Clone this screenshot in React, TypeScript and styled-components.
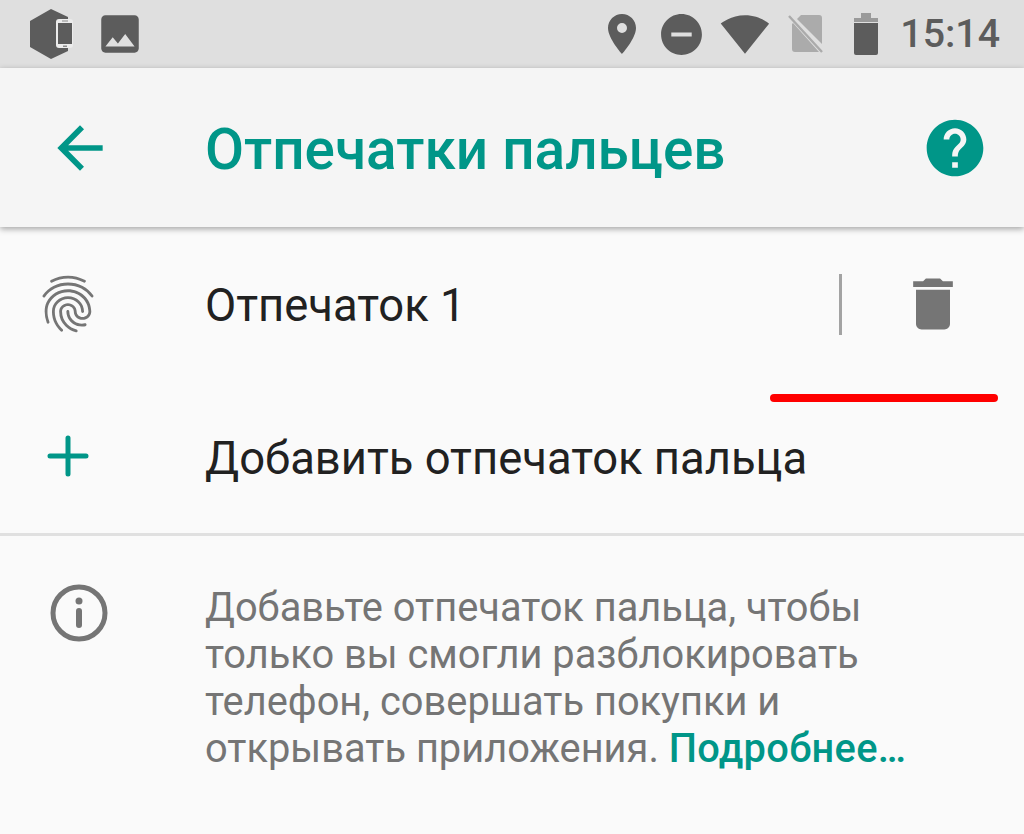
import * as React from 'react';
import styled, { createGlobalStyle } from 'styled-components';
import {
    MdArrowBack,
    MdDelete,
    MdDoNotDisturbOn,
    MdFingerprint,
    MdHelp,
    MdImage,
    MdPlace,
    MdSignalWifi4Bar,
} from 'react-icons/md';

const GlobalStyle = createGlobalStyle`
    html, body {
        margin: 0;
        padding: 0;
        background: #fafafa;
    }
    body {
        font-family: Roboto, "Noto Sans", sans-serif;
    }
`;

const Screen = styled.div`
    position: relative;
    width: 1024px;
    height: 834px;
    overflow: hidden;
    background: #fafafa;
`;

const StatusBar = styled.div`
    height: 68px;
    background: #dfdfdf;
    color: #5c5c5c;
    display: flex;
    align-items: center;
    justify-content: space-between;
    padding: 0 24px 0 30px;
    box-sizing: border-box;
`;

const StatusGroup = styled.div`
    display: flex;
    align-items: center;
    gap: 11px;
`;

const LeftGroup = styled(StatusGroup)`
    gap: 22px;
`;

const WifiIcon = styled(MdSignalWifi4Bar)`
    margin: 0 2px 0 3px;
`;

const Clock = styled.span`
    font-size: 39.3px;
    font-weight: 500;
    margin-left: -1px;
`;

const Toolbar = styled.header`
    position: relative;
    height: 159px;
    background: #f5f5f5;
    box-shadow: 0 2px 6px rgba(0, 0, 0, 0.35);
    display: flex;
    align-items: center;
    color: #009688;
`;

const IconSlot = styled.div<{ $left: number }>`
    width: 205px;
    flex: none;
    padding-left: ${({ $left }) => $left}px;
    box-sizing: border-box;
    display: flex;
    align-items: center;
`;

const InfoSlot = styled(IconSlot)`
    align-items: flex-start;
`;

const Title = styled.h1`
    flex: 1;
    margin: 0;
    padding-top: 4px;
    font-size: 56.7px;
    font-weight: 500;
`;

const HelpButton = styled.div`
    display: flex;
    margin-right: 35px;
`;

const Row = styled.div<{ $height: number }>`
    height: ${({ $height }) => $height}px;
    display: flex;
    align-items: center;
    color: #212121;
`;

const RowText = styled.div`
    flex: 1;
    padding-top: 3px;
    font-size: 45.4px;
`;

const RowDivider = styled.div`
    width: 3px;
    height: 61px;
    background: #a3a3a3;
`;

const TrashSlot = styled.div`
    display: flex;
    margin: 0 57px;
    color: #757575;
`;

const GreyIcon = styled.div`
    display: flex;
    color: #757575;
`;

const TealIcon = styled.div`
    display: flex;
    margin-bottom: 3px;
    color: #009688;
`;

const Divider = styled.div`
    height: 3px;
    background: #e0e0e0;
`;

const InfoSection = styled.section`
    display: flex;
    padding-top: 48px;
`;

const InfoText = styled.p`
    margin: 0;
    font-size: 39.8px;
    line-height: 47px;
    color: #757575;
`;

const MoreLink = styled.span`
    color: #009688;
    font-weight: 500;
    letter-spacing: 0.3px;
`;

const RedMark = styled.div`
    position: absolute;
    left: 770px;
    top: 394px;
    width: 228px;
    height: 8px;
    border-radius: 4px;
    background: #ff0000;
`;

const HexIcon = () => (
    <svg width="43" height="50" viewBox="0 0 43 50">
        <path d="M21 0 L38 8 V42 L21 50 L0 38 V12 Z" fill="#5c5c5c" />
        <rect x="26" y="10" width="17" height="29" rx="3" fill="#ececec" />
        <rect x="28" y="14" width="14" height="21" fill="#5c5c5c" />
        <rect x="32" y="11.5" width="6" height="1" fill="#8a8a8a" />
        <rect x="33" y="36.5" width="4" height="1.5" fill="#8a8a8a" />
    </svg>
);

const SimOffIcon = () => (
    <svg width="48" height="48" viewBox="0 0 48 48">
        <path d="M18 5 H36 a3 3 0 0 1 3 3 V34 L14 9 Z M10 13 L36 42 H12 a3 3 0 0 1 -3 -3 V14 Z" fill="#ababab" />
        <path d="M6 6 L39 42" stroke="#ababab" strokeWidth="2.4" />
    </svg>
);

const BatteryIcon = () => (
    <svg width="48" height="48" viewBox="0 0 48 48">
        <rect x="19" y="3" width="10" height="6" fill="#9a9a9a" />
        <rect x="12" y="8" width="24" height="4" fill="#9a9a9a" />
        <path d="M12 13 H36 V43 a2 2 0 0 1 -2 2 H14 a2 2 0 0 1 -2 -2 Z" fill="currentColor" />
    </svg>
);

const PlusIcon = () => (
    <svg width="68" height="68" viewBox="0 0 68 68">
        <path d="M16 34 H52 M34 16 V52" stroke="currentColor" strokeWidth="5" strokeLinecap="round" fill="none" />
    </svg>
);

const InfoIcon = () => (
    <svg width="58" height="58" viewBox="0 0 58 58">
        <circle cx="29" cy="29" r="26" stroke="currentColor" strokeWidth="5" fill="none" />
        <circle cx="29" cy="17" r="3.5" fill="currentColor" />
        <path d="M29 27 V41" stroke="currentColor" strokeWidth="6" strokeLinecap="round" />
    </svg>
);

export default function App() {
    return (
        <Screen>
            <GlobalStyle />
            <StatusBar>
                <LeftGroup>
                    <HexIcon />
                    <MdImage size={50} />
                </LeftGroup>
                <StatusGroup>
                    <MdPlace size={48} />
                    <MdDoNotDisturbOn size={49} />
                    <WifiIcon size={50} />
                    <SimOffIcon />
                    <BatteryIcon />
                    <Clock>15:14</Clock>
                </StatusGroup>
            </StatusBar>
            <Toolbar>
                <IconSlot $left={46}>
                    <MdArrowBack size={68} />
                </IconSlot>
                <Title>Отпечатки пальцев</Title>
                <HelpButton>
                    <MdHelp size={68} />
                </HelpButton>
            </Toolbar>
            <Row $height={154}>
                <IconSlot $left={34}>
                    <GreyIcon>
                        <MdFingerprint size={68} />
                    </GreyIcon>
                </IconSlot>
                <RowText>Отпечаток 1</RowText>
                <RowDivider />
                <TrashSlot>
                    <MdDelete size={68} />
                </TrashSlot>
            </Row>
            <Row $height={152}>
                <IconSlot $left={34}>
                    <TealIcon>
                        <PlusIcon />
                    </TealIcon>
                </IconSlot>
                <RowText>Добавить отпечаток пальца</RowText>
            </Row>
            <Divider />
            <InfoSection>
                <InfoSlot $left={50}>
                    <GreyIcon>
                        <InfoIcon />
                    </GreyIcon>
                </InfoSlot>
                <InfoText>
                    Добавьте отпечаток пальца, чтобы
                    <br />
                    только вы смогли разблокировать
                    <br />
                    телефон, совершать покупки и
                    <br />
                    открывать приложения. <MoreLink>Подробнее…</MoreLink>
                </InfoText>
            </InfoSection>
            <RedMark />
        </Screen>
    );
}
